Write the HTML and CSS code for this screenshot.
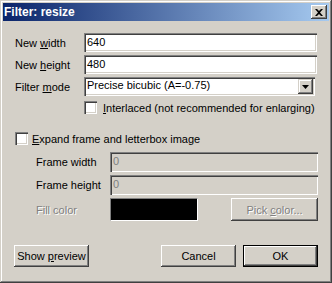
FILE: index.html
```html
<!DOCTYPE html>
<html lang="en">
<head>
    <meta charset="UTF-8">
    <title>Filter: resize</title>
    <link rel="stylesheet" href="styles.css">
</head>
<body>

<div class="window">
    <div class="titlebar">
        <span class="title">Filter: resize</span>
        <span class="close">
            <svg width="8" height="7" viewBox="0 0 8 7"><path d="M0 0h2l2 2 2-2h2L5 3.5 8 7H6L4 5 2 7H0l3-3.5z" fill="#000"/></svg>
        </span>
    </div>

    <div class="content">
        <div class="row">
            <label class="lbl">New <u>w</u>idth</label>
            <div class="field">640</div>
        </div>
        <div class="row">
            <label class="lbl">New <u>h</u>eight</label>
            <div class="field">480</div>
        </div>
        <div class="row">
            <label class="lbl">Filter <u>m</u>ode</label>
            <div class="field combo">
                <span>Precise bicubic (A=-0.75)</span>
                <span class="drop">
                    <svg width="7" height="4" viewBox="0 0 7 4"><path d="M0 0h7L3.5 4z" fill="#000"/></svg>
                </span>
            </div>
        </div>
        <div class="row check-row indent">
            <span class="check"></span>
            <span><u>I</u>nterlaced (not recommended for enlarging)</span>
        </div>

        <div class="row check-row expand">
            <span class="check"></span>
            <span><u>E</u>xpand frame and letterbox image</span>
        </div>

        <div class="frame">
            <div class="row">
                <label class="lbl2">Frame width</label>
                <div class="field disabled">0</div>
            </div>
            <div class="row">
                <label class="lbl2">Frame height</label>
                <div class="field disabled">0</div>
            </div>
            <div class="row color-row">
                <label class="lbl2 gray">Fill color</label>
                <div class="swatch"></div>
                <div class="btn pick gray"><span>Pick <u>c</u>olor...</span></div>
            </div>
        </div>

        <div class="buttons">
            <div class="btn"><span>Show <u>p</u>review</span></div>
            <div class="spacer"></div>
            <div class="btn"><span>Cancel</span></div>
            <div class="btn default"><span>OK</span></div>
        </div>
    </div>
</div>

</body>
</html>
```

FILE: styles.css
```css
body {
    margin: 0;
    padding: 0;
    background: #d4d0c8;
    font-family: "Liberation Sans", Arial, sans-serif;
    font-size: 11px;
    color: #000;
}
.window {
    width: 332px;
    height: 283px;
    box-sizing: border-box;
    padding: 3px;
    background: #d4d0c8;
    box-shadow: inset -1px -1px #404040, inset 1px 1px #d4d0c8, inset -2px -2px #808080, inset 2px 2px #fff;
}
.titlebar {
    height: 18px;
    display: flex;
    align-items: center;
    justify-content: space-between;
    padding: 0 2px 0 1px;
    background: linear-gradient(to right, #0a246a, #a6caf0);
}
.title {
    color: #fff;
    font-weight: bold;
    font-size: 12px;
}
.close {
    width: 16px;
    height: 14px;
    display: flex;
    align-items: center;
    justify-content: center;
    background: #d4d0c8;
    box-shadow: inset -1px -1px #404040, inset 1px 1px #fff, inset -2px -2px #808080;
}
.content {
    padding: 12px 10px 0 12px;
}
.row {
    display: flex;
    align-items: center;
    height: 19px;
    margin-bottom: 3px;
    white-space: nowrap;
}
.lbl {
    width: 69px;
}
.field {
    flex: 1;
    height: 19px;
    box-sizing: border-box;
    padding: 3px 3px 0;
    background: #fff;
    box-shadow: inset 1px 1px #808080, inset 2px 2px #404040, inset -1px -1px #fff, inset -2px -2px #d4d0c8;
    margin-right: 2px;
}
.combo {
    display: flex;
    justify-content: space-between;
    padding: 2px 2px 0 3px;
    margin-right: 4px;
}
.drop {
    width: 15px;
    height: 15px;
    display: flex;
    align-items: center;
    justify-content: center;
    background: #d4d0c8;
    box-shadow: inset -1px -1px #404040, inset 1px 1px #d4d0c8, inset -2px -2px #808080, inset 2px 2px #fff;
}
.indent {
    padding-left: 69px;
    height: 17px;
}
.check {
    width: 13px;
    height: 13px;
    flex: none;
    box-sizing: border-box;
    margin-right: 6px;
    background: #fff;
    box-shadow: inset 1px 1px #808080, inset 2px 2px #404040, inset -1px -1px #fff, inset -2px -2px #d4d0c8;
}
.check-row.expand {
    margin-top: 13px;
    margin-bottom: 4px;
}
.check-row.expand .check {
    margin-right: 4px;
}
.frame {
    padding-left: 21px;
}
.frame .row {
    height: 20px;
}
.frame .field {
    height: 20px;
    margin-right: 1px;
}
.lbl2 {
    width: 74px;
}
.disabled {
    background: #d4d0c8;
    color: #808080;
}
.gray {
    color: #808080;
    text-shadow: 1px 1px #fff;
}
.frame .color-row {
    height: 23px;
    margin-top: 3px;
}
.swatch {
    width: 88px;
    height: 23px;
    box-sizing: border-box;
    background: #000;
    border: 1px solid #fff;
    border-top-color: #808080;
    border-left-color: #808080;
}
.btn {
    height: 22px;
    width: 75px;
    box-sizing: border-box;
    display: flex;
    align-items: center;
    justify-content: center;
    background: #d4d0c8;
    box-shadow: inset -1px -1px #404040, inset 1px 1px #fff, inset -2px -2px #808080, inset 2px 2px #d4d0c8;
}
.pick {
    width: 87px;
    height: 23px;
    margin-left: 33px;
}
.buttons {
    display: flex;
    margin-top: 24px;
    margin-left: -1px;
    padding-right: 1px;
}
.spacer {
    flex: 1;
}
.default {
    margin-left: 7px;
    box-shadow: inset 0 0 0 1px #000, inset -2px -2px #404040, inset 2px 2px #fff, inset -3px -3px #808080;
}
```
